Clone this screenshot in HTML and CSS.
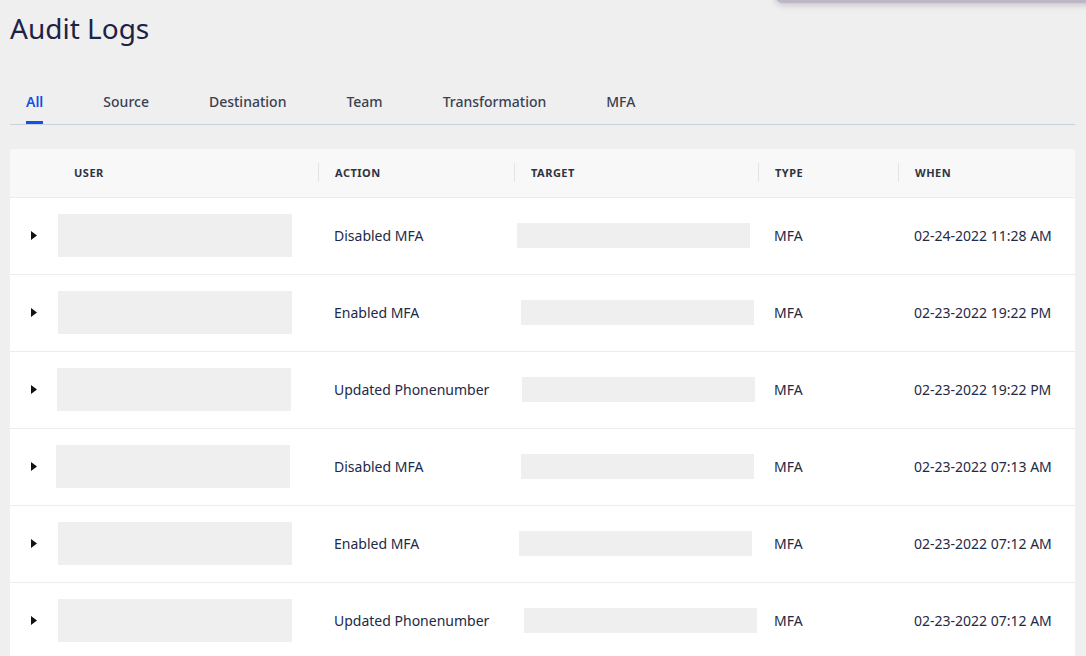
FILE: index.html
```html
<!DOCTYPE html>
<html>
<head>
<meta charset="utf-8">
<title>Audit Logs</title>
<link rel="stylesheet" href="styles.css">
</head>
<body>
<div class="popup-edge"></div>
<h1 class="title">Audit Logs</h1>
<nav class="tabs">
  <span class="tab active">All</span>
  <span class="tab">Source</span>
  <span class="tab">Destination</span>
  <span class="tab">Team</span>
  <span class="tab">Transformation</span>
  <span class="tab">MFA</span>
</nav>
<div class="table">
  <div class="row head">
    <div class="cell"></div>
    <div class="cell hcell">USER</div>
    <div class="cell hcell sep">ACTION</div>
    <div class="cell hcell sep">TARGET</div>
    <div class="cell hcell sep">TYPE</div>
    <div class="cell hcell sep">WHEN</div>
  </div>
  <div class="row">
    <div class="cell caret"><svg width="6" height="9" viewBox="0 0 6 9"><path d="M0 0 L6 4.5 L0 9 Z" fill="#111"/></svg></div>
    <div class="cell"><div class="ph user"></div></div>
    <div class="cell text">Disabled MFA</div>
    <div class="cell"><div class="ph target" style="margin-left:3px"></div></div>
    <div class="cell text">MFA</div>
    <div class="cell text">02-24-2022 11:28 AM</div>
  </div>
  <div class="row">
    <div class="cell caret"><svg width="6" height="9" viewBox="0 0 6 9"><path d="M0 0 L6 4.5 L0 9 Z" fill="#111"/></svg></div>
    <div class="cell"><div class="ph user"></div></div>
    <div class="cell text">Enabled MFA</div>
    <div class="cell"><div class="ph target" style="margin-left:7px"></div></div>
    <div class="cell text">MFA</div>
    <div class="cell text">02-23-2022 19:22 PM</div>
  </div>
  <div class="row">
    <div class="cell caret"><svg width="6" height="9" viewBox="0 0 6 9"><path d="M0 0 L6 4.5 L0 9 Z" fill="#111"/></svg></div>
    <div class="cell"><div class="ph user" style="margin-left:-1px"></div></div>
    <div class="cell text">Updated Phonenumber</div>
    <div class="cell"><div class="ph target" style="margin-left:8px"></div></div>
    <div class="cell text">MFA</div>
    <div class="cell text">02-23-2022 19:22 PM</div>
  </div>
  <div class="row">
    <div class="cell caret"><svg width="6" height="9" viewBox="0 0 6 9"><path d="M0 0 L6 4.5 L0 9 Z" fill="#111"/></svg></div>
    <div class="cell"><div class="ph user" style="margin-left:-2px"></div></div>
    <div class="cell text">Disabled MFA</div>
    <div class="cell"><div class="ph target" style="margin-left:7px"></div></div>
    <div class="cell text">MFA</div>
    <div class="cell text">02-23-2022 07:13 AM</div>
  </div>
  <div class="row">
    <div class="cell caret"><svg width="6" height="9" viewBox="0 0 6 9"><path d="M0 0 L6 4.5 L0 9 Z" fill="#111"/></svg></div>
    <div class="cell"><div class="ph user"></div></div>
    <div class="cell text">Enabled MFA</div>
    <div class="cell"><div class="ph target" style="margin-left:5px"></div></div>
    <div class="cell text">MFA</div>
    <div class="cell text">02-23-2022 07:12 AM</div>
  </div>
  <div class="row">
    <div class="cell caret"><svg width="6" height="9" viewBox="0 0 6 9"><path d="M0 0 L6 4.5 L0 9 Z" fill="#111"/></svg></div>
    <div class="cell"><div class="ph user"></div></div>
    <div class="cell text">Updated Phonenumber</div>
    <div class="cell"><div class="ph target" style="margin-left:10px"></div></div>
    <div class="cell text">MFA</div>
    <div class="cell text">02-23-2022 07:12 AM</div>
  </div>
</div>
</body>
</html>
```
FILE: styles.css
```css
* { box-sizing: border-box; }
html, body {
  margin: 0;
  background: #efefef;
  font-family: "Noto Sans", "Open Sans", sans-serif;
  overflow: hidden;
}
body {
  padding: 10px 11px 0 10px;
  height: 656px;
  position: relative;
}
.popup-edge {
  position: absolute;
  top: -20px;
  left: 775px;
  width: 330px;
  height: 23px;
  background: #bcb6c5;
  border-bottom-left-radius: 8px;
  box-shadow: 0 2px 6px rgba(0, 0, 0, 0.18);
}
.title {
  margin: 0;
  font-size: 28px;
  line-height: 36px;
  font-weight: 400;
  color: #1d2344;
}
.tabs {
  display: flex;
  gap: 60px;
  padding-left: 16px;
  margin-top: 46px;
  border-bottom: 1px solid #c8d2dc;
}
.tab {
  font-size: 14px;
  line-height: 20px;
  font-weight: 500;
  color: #3a4151;
  padding-bottom: 9px;
  border-bottom: 3px solid transparent;
}
.tab.active {
  color: #1250e6;
  font-weight: 600;
  border-bottom-color: #1250e6;
}
.table {
  margin-top: 24px;
  background: #fff;
  border-radius: 3px 3px 0 0;
}
.row {
  display: grid;
  grid-template-columns: 48px 260px 196px 244px 140px 1fr;
  height: 77px;
  padding-bottom: 2px;
  border-bottom: 1px solid #ececec;
  align-items: center;
}
.row.head {
  height: 49px;
  background: #f8f8f8;
  border-radius: 3px 3px 0 0;
}
.cell {
  display: flex;
  align-items: center;
  min-width: 0;
}
.hcell {
  font-size: 11px;
  font-weight: 700;
  letter-spacing: 0.5px;
  color: #2e3342;
  padding-left: 16px;
  height: 19px;
}
.hcell.sep {
  border-left: 1px solid #e4e4e4;
}
.caret {
  padding-left: 21px;
}
.text {
  font-size: 14px;
  color: #232946;
  padding-left: 16px;
}
.ph {
  background: #efefef;
}
.ph.user {
  width: 234px;
  height: 43px;
}
.ph.target {
  width: 233px;
  height: 25px;
}
```
